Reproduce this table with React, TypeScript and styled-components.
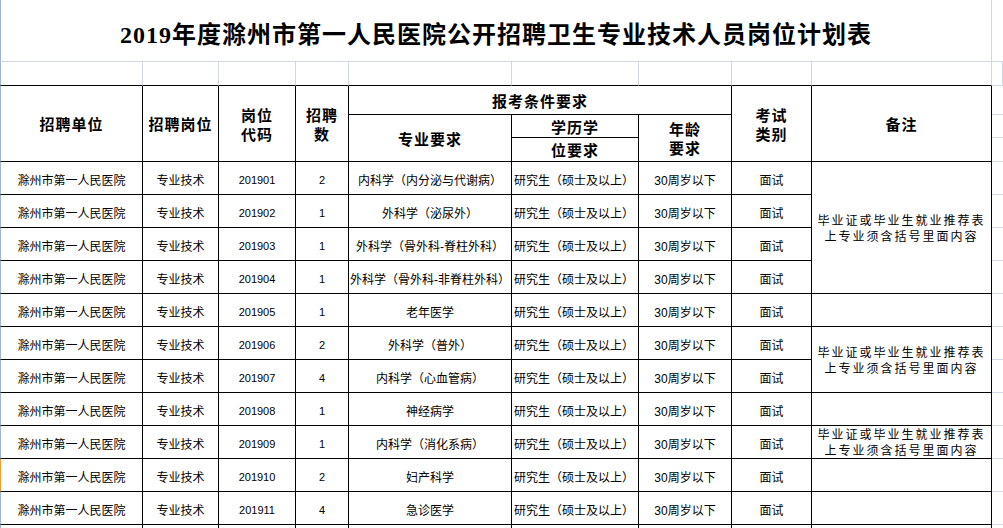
import styled, { createGlobalStyle } from 'styled-components';

const DARK = '#000';
const GRID = '#d0d7e5';
const HEADER_EDGE = '#9eb6ce';
const ACTIVE_EDGE = '#f29a36';

const GlobalStyle = createGlobalStyle`
  html, body {
    margin: 0;
    padding: 0;
    background: #fff;
  }
  body {
    font-family: "Liberation Sans", "Noto Sans CJK SC", sans-serif;
    color: #000;
  }
`;

const Sheet = styled.div`
  display: grid;
  grid-template-columns: 143px 76px 77px 53px 163px 127px 93px 80px 180px 1fr;
  grid-template-rows: 62px 24px 29px 23px 24px repeat(12, 33px);
  width: 1003px;
  height: 528px;
  overflow: hidden;
`;

type Place = {
  $col: number;
  $row: number;
  $colSpan?: number;
  $rowSpan?: number;
  $edge?: string;
};

const Cell = styled.div<Place>`
  grid-column: ${p => p.$col} / span ${p => p.$colSpan ?? 1};
  grid-row: ${p => p.$row} / span ${p => p.$rowSpan ?? 1};
  box-sizing: border-box;
  min-width: 0;
  border-left: ${p => (p.$edge ? `1px solid ${p.$edge}` : 'none')};
  display: flex;
  flex-direction: column;
  align-items: center;
  justify-content: center;
  text-align: center;
  white-space: nowrap;
  overflow: hidden;
`;

const TitleCell = styled(Cell)`
  border-right: 1px solid ${GRID};
  border-bottom: 1px solid ${GRID};
  font-family: "Liberation Serif", "Noto Sans CJK SC", serif;
  font-size: 24px;
  font-weight: 700;
  letter-spacing: 1px;
  padding-top: 3px;
`;

const GapCell = styled(Cell)<{ $inside: boolean }>`
  border-right: 1px solid ${GRID};
  border-bottom: 1px solid ${p => (p.$inside ? DARK : GRID)};
`;

const OuterCell = styled(Cell)`
  border-bottom: 1px solid ${GRID};
`;

const HeadCell = styled(Cell)`
  border-right: 1px solid ${DARK};
  border-bottom: 1px solid ${DARK};
  font-size: 15px;
  font-weight: 700;
  letter-spacing: 1px;
  line-height: 19px;
  padding-top: 2px;
`;

const DataCell = styled(Cell)<{ $left?: boolean; $num?: boolean }>`
  border-right: 1px solid ${DARK};
  border-bottom: 1px solid ${DARK};
  align-items: ${p => (p.$left ? 'flex-start' : 'center')};
  padding: 3px 0 0 ${p => (p.$left ? '2px' : '0')};
  font-size: ${p => (p.$num ? '11px' : '12px')};
`;

const NoteCell = styled(Cell)`
  border-right: 1px solid ${DARK};
  border-bottom: 1px solid ${DARK};
  font-size: 12px;
  letter-spacing: 2px;
  line-height: 16px;
  padding-top: 2px;
`;

const Line = styled.span`
  display: block;
`;

const UNIT = '滁州市第一人民医院';
const POST = '专业技术';
const EDU = '研究生（硕士及以上）';
const AGE = '30周岁以下';
const EXAM = '面试';
const ACTIVE_ROW = 9;

const rows = [
  { code: '201901', count: 2, major: '内科学（内分泌与代谢病）' },
  { code: '201902', count: 1, major: '外科学（泌尿外）' },
  { code: '201903', count: 1, major: '外科学（骨外科-脊柱外科）' },
  { code: '201904', count: 1, major: '外科学（骨外科-非脊柱外科）' },
  { code: '201905', count: 1, major: '老年医学' },
  { code: '201906', count: 2, major: '外科学（普外）' },
  { code: '201907', count: 4, major: '内科学（心血管病）' },
  { code: '201908', count: 1, major: '神经病学' },
  { code: '201909', count: 1, major: '内科学（消化系病）' },
  { code: '201910', count: 2, major: '妇产科学' },
  { code: '201911', count: 4, major: '急诊医学' },
];

// remark column merges, by data row index
const notes = [
  { start: 0, span: 4, text: true },
  { start: 4, span: 1, text: false },
  { start: 5, span: 2, text: true },
  { start: 7, span: 1, text: false },
  { start: 8, span: 1, text: true },
  { start: 9, span: 1, text: false },
  { start: 10, span: 1, text: false },
  { start: 11, span: 1, text: false },
];

const FIRST_DATA_ROW = 6;

const App = () => {
  return (
    <>
      <GlobalStyle />
      <Sheet>
        <TitleCell $col={1} $row={1} $colSpan={9} $edge={HEADER_EDGE}>
          2019年度滁州市第一人民医院公开招聘卫生专业技术人员岗位计划表
        </TitleCell>
        <OuterCell $col={10} $row={1} />

        {Array.from({ length: 10 }, (_, i) => (
          <GapCell
            key={'gap' + i}
            $col={i + 1}
            $row={2}
            $inside={i < 9}
            $edge={i === 0 ? HEADER_EDGE : undefined}
          />
        ))}

        <HeadCell $col={1} $row={3} $rowSpan={3} $edge={HEADER_EDGE}>招聘单位</HeadCell>
        <HeadCell $col={2} $row={3} $rowSpan={3}>招聘岗位</HeadCell>
        <HeadCell $col={3} $row={3} $rowSpan={3}>
          <Line>岗位</Line>
          <Line>代码</Line>
        </HeadCell>
        <HeadCell $col={4} $row={3} $rowSpan={3}>
          <Line>招聘</Line>
          <Line>数</Line>
        </HeadCell>
        <HeadCell $col={5} $row={3} $colSpan={3}>报考条件要求</HeadCell>
        <HeadCell $col={5} $row={4} $rowSpan={2}>专业要求</HeadCell>
        <HeadCell $col={6} $row={4}>学历学</HeadCell>
        <HeadCell $col={6} $row={5}>位要求</HeadCell>
        <HeadCell $col={7} $row={4} $rowSpan={2}>
          <Line>年龄</Line>
          <Line>要求</Line>
        </HeadCell>
        <HeadCell $col={8} $row={3} $rowSpan={3}>
          <Line>考试</Line>
          <Line>类别</Line>
        </HeadCell>
        <HeadCell $col={9} $row={3} $rowSpan={3}>备注</HeadCell>
        <OuterCell $col={10} $row={3} />
        <OuterCell $col={10} $row={4} />
        <OuterCell $col={10} $row={5} />

        {rows.map((r, i) => {
          const row = FIRST_DATA_ROW + i;
          return [
            <DataCell key={r.code + 'u'} $col={1} $row={row} $edge={i === ACTIVE_ROW ? ACTIVE_EDGE : HEADER_EDGE}>
              {UNIT}
            </DataCell>,
            <DataCell key={r.code + 'p'} $col={2} $row={row}>{POST}</DataCell>,
            <DataCell key={r.code + 'c'} $col={3} $row={row} $num>{r.code}</DataCell>,
            <DataCell key={r.code + 'n'} $col={4} $row={row} $num>{r.count}</DataCell>,
            <DataCell key={r.code + 'm'} $col={5} $row={row}>{r.major}</DataCell>,
            <DataCell key={r.code + 'e'} $col={6} $row={row} $left>{EDU}</DataCell>,
            <DataCell key={r.code + 'a'} $col={7} $row={row}>{AGE}</DataCell>,
            <DataCell key={r.code + 'x'} $col={8} $row={row}>{EXAM}</DataCell>,
            <OuterCell key={r.code + 'o'} $col={10} $row={row} />,
          ];
        })}

        {/* next row, cut off by the window */}
        {Array.from({ length: 8 }, (_, i) => (
          <DataCell
            key={'tail' + i}
            $col={i + 1}
            $row={FIRST_DATA_ROW + rows.length}
            $edge={i === 0 ? HEADER_EDGE : undefined}
          />
        ))}
        <OuterCell $col={10} $row={FIRST_DATA_ROW + rows.length} />

        {notes.map(n => (
          <NoteCell key={'note' + n.start} $col={9} $row={FIRST_DATA_ROW + n.start} $rowSpan={n.span}>
            {n.text && (
              <>
                <Line>毕业证或毕业生就业推荐表</Line>
                <Line>上专业须含括号里面内容</Line>
              </>
            )}
          </NoteCell>
        ))}
      </Sheet>
    </>
  );
};

export default App;
